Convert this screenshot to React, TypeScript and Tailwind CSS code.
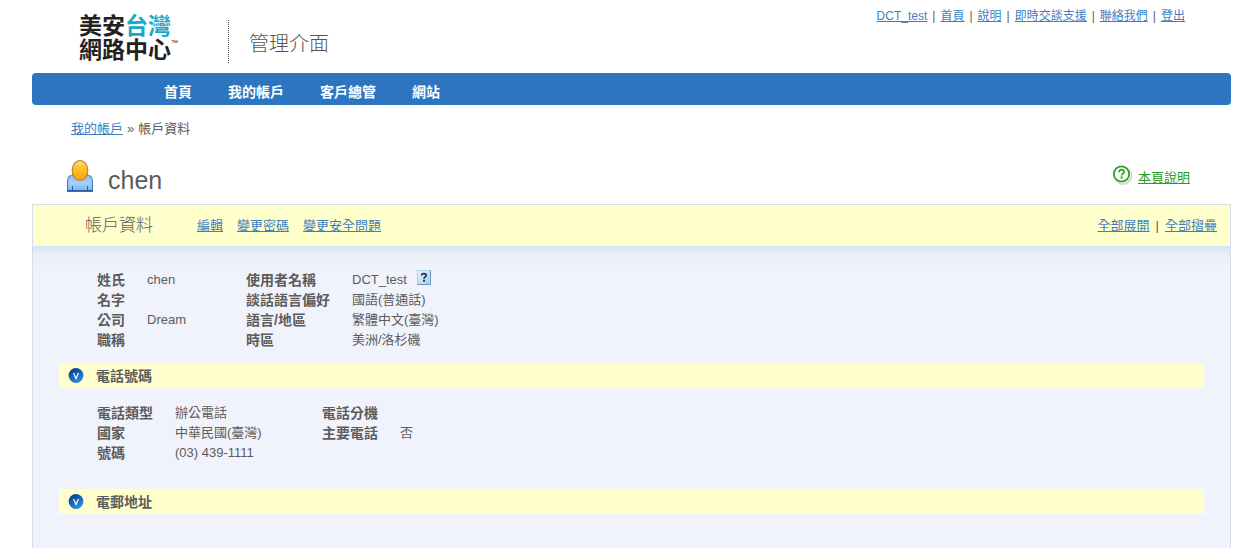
import { FC, MouseEvent, ReactNode, useState } from 'react';

interface Field {
    label: string;
    value: ReactNode;
}

const topLinks = [ 'DCT_test', '首頁', '說明', '即時交談支援', '聯絡我們', '登出' ];
const navItems = [ '首頁', '我的帳戶', '客戶總管', '網站' ];
const accountActions = [ '編輯', '變更密碼', '變更安全問題' ];

const linkClass = 'text-[#3f7fbf] underline hover:no-underline';

const UserIcon: FC = () => (
    <svg width="28" height="34" viewBox="0 0 28 34" aria-hidden="true">
        <defs>
            <linearGradient id="userHead" x1="0" y1="0" x2="0" y2="1">
                <stop offset="0" stopColor="#ffdf70" />
                <stop offset="0.4" stopColor="#ffc22e" />
                <stop offset="1" stopColor="#f9a010" />
            </linearGradient>
            <linearGradient id="userBody" x1="0" y1="0" x2="0" y2="1">
                <stop offset="0" stopColor="#8fc0ee" />
                <stop offset="0.5" stopColor="#a6d2fa" />
                <stop offset="1" stopColor="#6fb0f0" />
            </linearGradient>
        </defs>
        <path d="M1.5 32V22.5C1.5 18.5 3.5 16 7.5 16H20.5C24.5 16 26.5 18.5 26.5 22.5V32Z" fill="url(#userBody)" stroke="#4a7db8" strokeWidth="1.1" />
        <path d="M6.5 32V27M21.5 32V27" stroke="#2f65a8" strokeWidth="1" />
        <path d="M1 32H27" stroke="#1a4a8c" strokeWidth="1.4" />
        <ellipse cx="14" cy="11.5" rx="7.8" ry="10" fill="url(#userHead)" stroke="#bd8038" strokeWidth="1.2" />
    </svg>
);

const HelpIcon: FC = () => (
    <svg width="22" height="23" viewBox="0 0 22 23" aria-hidden="true">
        <circle cx="11" cy="11.5" r="9.8" fill="#000" opacity="0.08" />
        <circle cx="10.5" cy="11" r="9.6" fill="#000" opacity="0.12" />
        <circle cx="9.5" cy="10" r="9.5" fill="#fff" />
        <circle cx="9.5" cy="10" r="7.7" fill="#fff" stroke="#2ba01c" strokeWidth="1.8" />
        <path d="M7 8.2C7 6.5 8.1 5.7 9.5 5.7C11 5.7 12 6.6 12 7.9C12 9.6 9.6 9.6 9.6 11.4" fill="none" stroke="#2ba01c" strokeWidth="1.7" />
        <rect x="8.6" y="12.5" width="2" height="2" fill="#2ba01c" />
    </svg>
);

const ToggleIcon: FC<{ open: boolean }> = ({ open }) => (
    <svg width="16" height="16" viewBox="0 0 16 16" aria-hidden="true">
        <defs>
            <linearGradient id="toggleFill" x1="0" y1="0" x2="0.6" y2="1">
                <stop offset="0" stopColor="#072f73" />
                <stop offset="0.5" stopColor="#1461b4" />
                <stop offset="1" stopColor="#2f8be0" />
            </linearGradient>
        </defs>
        <circle cx="8" cy="7.5" r="7.4" fill="url(#toggleFill)" />
        <path d={open ? 'M5.5 5L8 10.5L10.5 5' : 'M6 5L10.5 7.5L6 10'} fill="none" stroke="#fff" strokeWidth="1.2" />
    </svg>
);

const HintIcon: FC = () => (
    <svg width="14" height="15" viewBox="0 0 14 15" aria-hidden="true">
        <defs>
            <linearGradient id="hintFill" x1="0" y1="0" x2="1" y2="1">
                <stop offset="0" stopColor="#e9f4fd" />
                <stop offset="1" stopColor="#a9cce8" />
            </linearGradient>
        </defs>
        <rect x="0.5" y="0.5" width="13" height="14" fill="url(#hintFill)" stroke="#b4cee4" />
        <path d="M13.5 0.5V14.5H0.5" fill="none" stroke="#6f9ac4" />
        <path d="M4.7 5.6C4.7 4.2 5.6 3.7 6.9 3.7C8.2 3.7 9.1 4.3 9.1 5.4C9.1 7 7 6.9 7 8.8" fill="none" stroke="#16365f" strokeWidth="1.7" />
        <rect x="6" y="9.8" width="2" height="1.8" fill="#16365f" />
    </svg>
);

const DetailRow: FC<{ fields: Field[] }> = ({ fields }) => (
    <tr className="h-5">
        {fields.map((field, ix) => [
            <th key={`label-${ix}`} scope="row" className="text-left text-sm leading-5 font-bold">{field.label}</th>,
            <td key={`value-${ix}`} className="text-[13px] leading-5">{field.value}</td>,
        ])}
    </tr>
);

const SectionBar: FC<{ title: string, open: boolean, onToggle: () => void }> = ({ title, open, onToggle }) => (
    <h3 className="bg-[#ffffcc]">
        <button type="button" aria-expanded={open} onClick={onToggle} className="flex h-[25px] w-full items-center gap-3 pl-[9px] text-left text-sm font-bold">
            <ToggleIcon open={open} />
            {title}
        </button>
    </h3>
);

const App: FC = () => {
    const [ phoneOpen, setPhoneOpen ] = useState<boolean>(true);
    const [ emailOpen, setEmailOpen ] = useState<boolean>(true);

    const setAll = (e: MouseEvent, open: boolean) => {
        e.preventDefault();
        setPhoneOpen(open);
        setEmailOpen(open);
    };

    return (
        <div className="flex min-h-screen flex-col bg-white pr-[27px] pl-8 font-['Liberation_Sans','Noto_Sans_CJK_TC',sans-serif] text-[13px] leading-5 text-[#5c5c5c]">
            <header className="flex h-[73px] items-start justify-between pr-[46px] pl-[47px]">
                <div className="flex">
                    <div className="mt-[14px] w-[149px] text-[23px] leading-6 font-bold text-[#222]">
                        <div>美安<span className="text-[#18a9c9]">台灣</span></div>
                        <div className="flex items-start">網路中心<span className="text-[7px] leading-[10px] font-normal">™</span></div>
                    </div>
                    <div className="mt-5 flex h-[43px] items-center border-l border-dotted border-[#555] pt-1 pl-5 text-xl font-light text-[#555]">管理介面</div>
                </div>
                <nav className="mt-1.5 flex gap-[5px] text-xs leading-5">
                    {topLinks.map((link, ix) => [
                        0 < ix && <span key={`sep-${ix}`}>|</span>,
                        <a key={link} href="#" className={linkClass}>{link}</a>,
                    ])}
                </nav>
            </header>

            <nav className="flex h-8 items-center gap-9 rounded bg-[#2e75c0] pt-1.5 pl-[132px] text-sm font-bold text-white">
                {navItems.map(item => <a key={item} href="#">{item}</a>)}
            </nav>

            <div className="mt-[14px] flex gap-1 pl-[39px]">
                <a href="#" className={linkClass}>我的帳戶</a>
                <span>»</span>
                <span>帳戶資料</span>
            </div>

            <div className="flex h-[65px] items-center justify-between pt-2 pr-[41px] pl-[34px]">
                <h1 className="flex items-center gap-[14px] text-[25px] leading-8">
                    <UserIcon />
                    <span className="pt-2">chen</span>
                </h1>
                <a href="#" className="flex items-start gap-1 text-[#2a9a1c] underline">
                    <HelpIcon />
                    <span className="pt-1">本頁說明</span>
                </a>
            </div>

            <main className="flex-1 border border-b-0 border-[#d3deec] bg-[#f0f3fb]">
                <div className="flex h-[41px] items-center justify-between bg-[#ffffcc] pr-[13px] pl-[52px]">
                    <div className="flex items-center gap-[14px]">
                        <h2 className="mr-[30px] text-[17px] font-light">帳戶資料</h2>
                        {accountActions.map(action => <a key={action} href="#" className={linkClass}>{action}</a>)}
                    </div>
                    <div className="flex gap-1.5">
                        <a href="#" className={linkClass} onClick={(e) => setAll(e, true)}>全部展開</a>
                        <span>|</span>
                        <a href="#" className={linkClass} onClick={(e) => setAll(e, false)}>全部摺疊</a>
                    </div>
                </div>

                <div className="bg-linear-to-b from-[#d6e2f2] via-[#e9eff8] via-[8px] to-[#f0f3fb] to-[26px] pt-6 pb-[13px] pl-16">
                    <table className="table-fixed border-collapse">
                        <colgroup>
                            <col className="w-[50px]" />
                            <col className="w-[99px]" />
                            <col className="w-[106px]" />
                            <col className="w-[200px]" />
                        </colgroup>
                        <tbody>
                            <DetailRow fields={[
                                { label: '姓氏', value: 'chen' },
                                { label: '使用者名稱', value: (
                                    <span className="flex items-start gap-2.5">
                                        DCT_test
                                        <button type="button" aria-label="說明"><HintIcon /></button>
                                    </span>
                                ) },
                            ]} />
                            <DetailRow fields={[ { label: '名字', value: '' }, { label: '談話語言偏好', value: '國語(普通話)' } ]} />
                            <DetailRow fields={[ { label: '公司', value: 'Dream' }, { label: '語言/地區', value: '繁體中文(臺灣)' } ]} />
                            <DetailRow fields={[ { label: '職稱', value: '' }, { label: '時區', value: '美洲/洛杉磯' } ]} />
                        </tbody>
                    </table>
                </div>

                <div className="px-[26px]">
                    <SectionBar title="電話號碼" open={phoneOpen} onToggle={() => setPhoneOpen(!phoneOpen)} />
                    {phoneOpen && <div className="pt-[15px] pb-[26px] pl-[38px]">
                        <table className="table-fixed border-collapse">
                            <colgroup>
                                <col className="w-[78px]" />
                                <col className="w-[147px]" />
                                <col className="w-[78px]" />
                                <col className="w-[100px]" />
                            </colgroup>
                            <tbody>
                                <DetailRow fields={[ { label: '電話類型', value: '辦公電話' }, { label: '電話分機', value: '' } ]} />
                                <DetailRow fields={[ { label: '國家', value: '中華民國(臺灣)' }, { label: '主要電話', value: '否' } ]} />
                                <DetailRow fields={[ { label: '號碼', value: '(03) 439-1111' } ]} />
                            </tbody>
                        </table>
                    </div>}
                    <SectionBar title="電郵地址" open={emailOpen} onToggle={() => setEmailOpen(!emailOpen)} />
                </div>
            </main>
        </div>
    );
};

export default App;
